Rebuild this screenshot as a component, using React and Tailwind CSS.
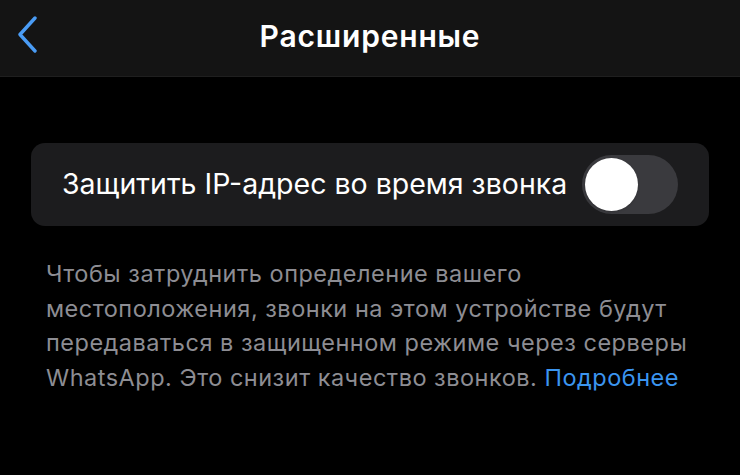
import { useState } from 'react'

const font = { fontFamily: 'Inter, "Noto Sans", sans-serif' }

const App = () => {
  const [on, setOn] = useState(false)

  return (
    <div className="w-[740px] h-[475px] bg-black overflow-hidden" style={font}>
      <header className="relative h-[77px] bg-[#141414] border-b border-[#1f1f1f] flex items-center justify-center">
        <button className="absolute left-[12px] top-[12px] p-1">
          <svg width="22" height="38" viewBox="0 0 22 38" fill="none">
            <path d="M19 2L4 18.5 19 35" stroke="#4a9cf5" strokeWidth="3.4" strokeLinecap="round" strokeLinejoin="round" />
          </svg>
        </button>
        <h1 className="text-[30px] font-semibold text-white tracking-[0.8px] -mt-[4px]">Расширенные</h1>
      </header>

      <div className="px-[31px] pt-[66px]">
        <div className="h-[83px] rounded-[14px] bg-[#1c1c1e] flex items-center justify-between pl-[31px] pr-[31px]">
          <span className="text-[28.5px] text-white">Защитить IP-адрес во время звонка</span>
          <button
            onClick={() => setOn(!on)}
            className={`w-[96px] h-[59px] rounded-full p-[3px] flex ${on ? 'bg-[#34c759] justify-end' : 'bg-[#3a3a3e] justify-start'}`}
          >
            <span className="w-[53px] h-[53px] rounded-full bg-white shadow" />
          </button>
        </div>

        <p className="mt-[31px] pl-[15px] text-[23.5px] leading-[34.5px] text-[#8d8d93] tracking-[0.5px]">
          Чтобы затруднить определение вашего<br />
          местоположения, звонки на этом устройстве будут<br />
          передаваться в защищенном режиме через серверы<br />
          WhatsApp. Это снизит качество звонков. <span className="text-[#3b95f0]">Подробнее</span>
        </p>
      </div>
    </div>
  )
}

export default App
